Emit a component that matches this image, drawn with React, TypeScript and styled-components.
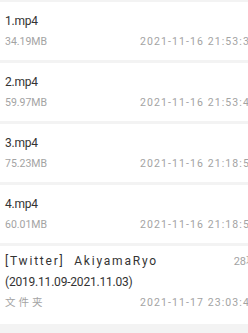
import React from "react";
import styled, { createGlobalStyle } from "styled-components";

const Global = createGlobalStyle`
  html, body { margin: 0; padding: 0; overflow: hidden; background: #f3f3f3; }
  body { font-family: Roboto, "Noto Sans CJK SC", sans-serif; }
`;

const List = styled.div`
  width: 265px;
  padding-top: 2px;
  display: flex;
  flex-direction: column;
  gap: 3px;
`;

const Card = styled.div<{ $h: number; $top: number }>`
  background: #ffffff;
  padding: ${(p) => p.$top}px 8px 0 5px;
  height: ${(p) => p.$h}px;
  box-sizing: border-box;
  display: flex;
  flex-direction: column;
`;

const Row = styled.div`
  display: flex;
  justify-content: space-between;
  align-items: baseline;
`;

const Title = styled.div<{ $spread?: boolean }>`
  font-size: 12px;
  line-height: 21px;
  color: #333333;
  letter-spacing: ${(p) => (p.$spread ? "1.8px" : "-0.2px")};
  white-space: pre;
`;

const Meta = styled.div<{ $spread?: boolean }>`
  font-size: 10.5px;
  line-height: 16px;
  margin-top: 2px;
  color: #a3a3a3;
  letter-spacing: ${(p) => (p.$spread ? "3px" : "0")};
`;

const Date = styled.div`
  font-size: 10.5px;
  line-height: 16px;
  margin-top: 2px;
  color: #a3a3a3;
  letter-spacing: 1.1px;
  white-space: nowrap;
`;

const Count = styled.div`
  font-size: 11px;
  color: #a3a3a3;
`;

const files = [
  { name: "1.mp4", size: "34.19MB", date: "2021-11-16 21:53:35" },
  { name: "2.mp4", size: "59.97MB", date: "2021-11-16 21:53:43" },
  { name: "3.mp4", size: "75.23MB", date: "2021-11-16 21:18:52" },
  { name: "4.mp4", size: "60.01MB", date: "2021-11-16 21:18:56" },
];

export default function App() {
  return (
    <>
      <Global />
      <List>
        {files.map((f) => (
          <Card key={f.name} $h={58} $top={9}>
            <Title>{f.name}</Title>
            <Row>
              <Meta>{f.size}</Meta>
              <Date>{f.date}</Date>
            </Row>
          </Card>
        ))}
        <Card $h={78} $top={5}>
          <Row>
            <Title $spread>{"[Twitter]  AkiyamaRyo"}</Title>
            <Count>28项</Count>
          </Row>
          <Title>(2019.11.09-2021.11.03)</Title>
          <Row>
            <Meta $spread>文件夹</Meta>
            <Date>2021-11-17 23:03:41</Date>
          </Row>
        </Card>
      </List>
    </>
  );
}
